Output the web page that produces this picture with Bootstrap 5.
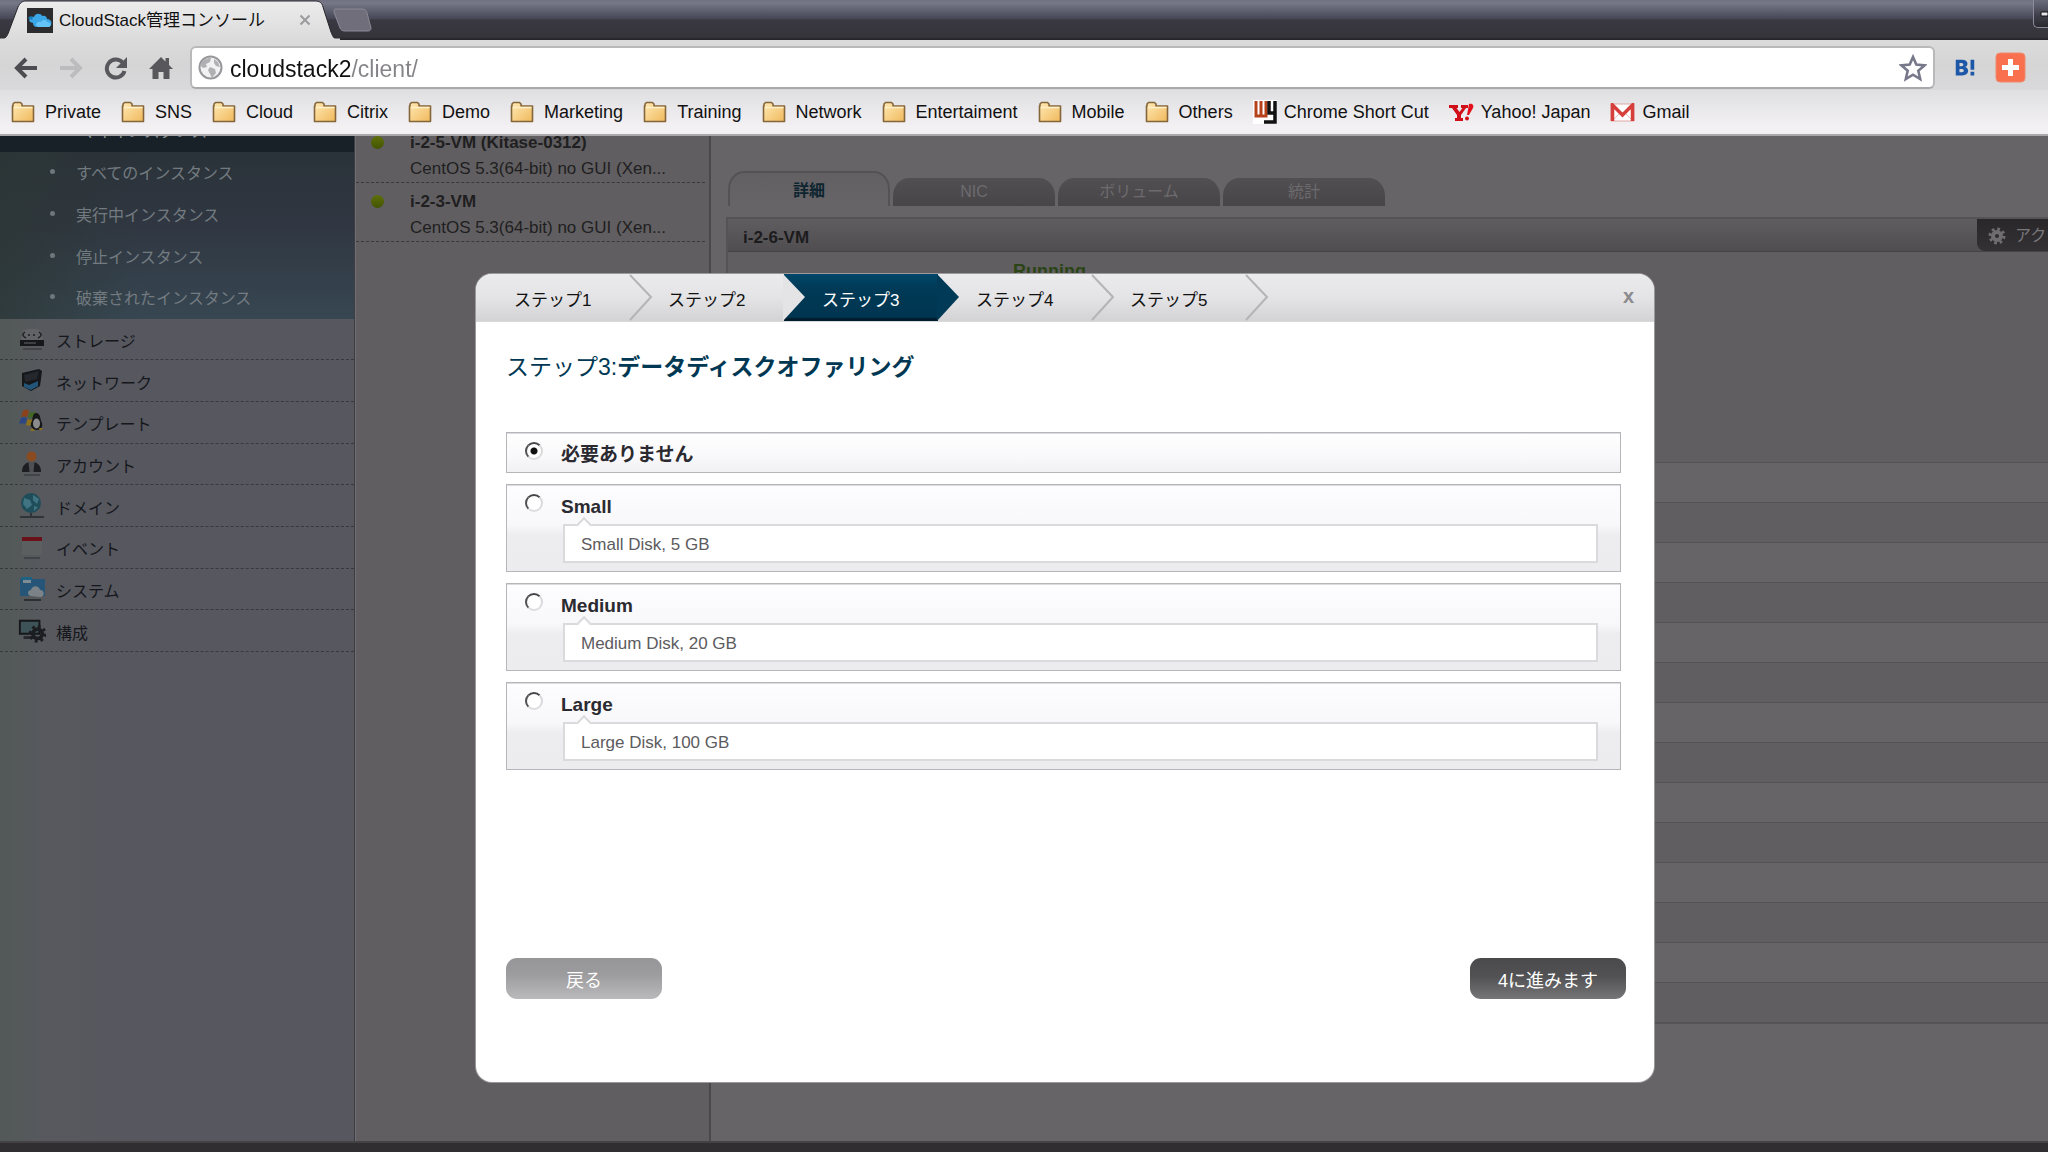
<!DOCTYPE html>
<html lang="ja">
<head>
<meta charset="utf-8">
<meta name="viewport" content="width=device-width, initial-scale=1">
<title>CloudStack管理コンソール</title>
<link href="https://cdn.jsdelivr.net/npm/bootstrap@5.3.0/dist/css/bootstrap.min.css" rel="stylesheet">
<style>
  body { font-family: "Liberation Sans", "Noto Sans CJK JP", sans-serif; font-size: 18px; line-height: 24px; color: #111; background: #676467; }
  a { color: inherit; text-decoration: none; }
  svg { display: block; flex: none; }

  /* browser frame */
  .titlebar { height: 40px; background: linear-gradient(#6f7080 0, #767787 3px, #4a4b5b 17px, #4a4b5b 18px, #3a3942 20px, #35343a 37px, #222126 40px); }
  .tab-shape { inset: 0 auto auto 0; }
  .tab-content-row { width: 330px; padding-left: 27px; font-size: 17px; }
  .tab-title { margin-left: 6px; padding-top: 2px; }
  .tab-close { border: 0; background: none; padding: 0; width: 14px; height: 14px; margin-right: 17px; }
  .newtab { border: 0; background: none; padding: 0; margin-left: 3px; height: 24px; }
  .winctl { width: 15px; height: 28px; border: solid #8b8c99; border-width: 0 0 1px 1px; border-radius: 0 0 0 5px; background: linear-gradient(#6b6c7b, #3d3d49 60%, #2b2a31); }
  .toolbar { height: 50px; background: linear-gradient(#dcdbdc, #d6d5d6 50%, #d9d8da); padding: 5px 22px 0 14px; }
  .tool-btn { border: 0; background: none; padding: 0; }
  .urlbox { height: 43px; background: #fff; border: 2px solid #b9b8bb; border-bottom-color: #a9a8ab; border-radius: 6px; padding: 0 6px 0 6px; margin-left: 17px; }
  .urlbox input { border: 0; outline: 0; min-width: 0; padding: 2px 0 0; margin-left: 7px; font-size: 23px; line-height: 30px; color: transparent; background: linear-gradient(90deg, #111 120px, #858387 120px); -webkit-background-clip: text; background-clip: text; }
  .bookmarks { height: 46px; gap: 20px; padding: 0 11px; background: linear-gradient(#dfdee0, #f3f1f3 85%); border-bottom: 2px solid #a9a8aa; }
  .bookmarks a { display: flex; align-items: center; gap: 10px; white-space: nowrap; }
  .bookmarks a.site { gap: 7px; }

  /* console */
  .side { width: 355px; background: linear-gradient(90deg, #525957, #57595e 12%, #57575f 45%, #57575f); border-right: 1px solid #3c3c41; font-size: 16px; }
  .side-current { height: 16px; background: #172127; color: #8b9193; padding: 0 0 10px 80px; }
  .side-current a { line-height: 20px; }
  .side-nav { display: grid; grid-auto-rows: 1fr; height: 500px; }
  .sub-group { grid-row: span 4; display: grid; grid-auto-rows: 1fr; background: linear-gradient(90deg, rgba(44,54,52,.7), rgba(44,54,52,0) 40%), linear-gradient(#2a3239, #303742 45%, #374752); color: #737b80; }
  .sub-group a { display: flex; align-items: center; gap: 21px; padding: 3px 0 0 50px; }
  .sub-group a::before { content: ""; width: 5px; height: 5px; border-radius: 50%; background: #6d777c; margin-bottom: 5px; }
  .main-item { display: flex; align-items: center; gap: 10px; padding-left: 18px; color: #15171c; border-bottom: 1px dashed #38393e; }
  .main-item span { padding-top: 6px; }
  .vm-list { width: 356px; background: #605e61; border-right: 2px solid #4a484b; border-left: 1px solid #706e72; font-size: 17px; color: #1f1e20; overflow: hidden; }
  .vm-item { height: 59px; margin-right: 4px; padding: 6px 0 0 15px; gap: 26px; border-bottom: 1px dashed #3a383b; }
  .vm-item.first-vm { margin-top: -12px; }
  .vm-item b, .vm-item small { display: block; line-height: 26px; font-size: 17px; white-space: nowrap; }
  .vm-dot { width: 13px; height: 13px; margin-top: 6px; border-radius: 50%; background: linear-gradient(#5d7009, #435400); flex: none; }
  .detail { background: #676467; min-width: 0; padding: 35px 0 0 15px; overflow: hidden; }
  .detail-tabs { gap: 3px; padding-left: 2px; height: 35px; font-size: 16px; }
  .detail-tabs button { border: 0; width: 162px; height: 28px; padding: 0; color: #6d6b6e; background: linear-gradient(#514f52, #474548); border-radius: 16px 16px 0 0 / 18px 18px 0 0; }
  .detail-tabs button.current { height: 35px; padding-top: 2px; color: #0e2530; background: linear-gradient(#626063, #676467); border: 2px solid #545255; border-bottom: 0; font-weight: bold; }
  .detail-box { margin-top: 11px; border: 2px solid #555356; border-right: 0; background: #605e61; }
  .detail-head { height: 33px; background: linear-gradient(#5f5d60, #4f4d50); border-bottom: 1px solid #454346; padding-left: 15px; font-size: 17px; color: #1c1b1d; }
  .detail-head b { padding-top: 5px; }
  .actions-btn { width: 71px; border: 0; padding: 2px 0 0 10px; background: linear-gradient(#29272a, #333134); color: #79777a; border-radius: 0 0 0 8px; overflow: hidden; white-space: nowrap; font-size: 16px; }
  .status-pane { height: 210px; padding: 7px 0 0 285px; font-size: 18px; color: #2b4415; }
  .data-line { height: 40px; border-top: 1px solid #545255; background: #605e61; }
  .data-line:nth-child(odd) { background: #676467; }
  .statusbar { height: 11px; background: #302e31; border-top: 2px solid #444245; }

  /* wizard */
  .wizard { left: 476px; top: 274px; width: 1178px; background: #fff; border-radius: 16px; box-shadow: 0 0 0 1px #9b999c; overflow: hidden; z-index: 5; }
  .wizard-head { height: 48px; background: linear-gradient(#ebeaec, #e4e3e5 50%, #d3d2d4); border-bottom: 1px solid #d9d8da; }
  .steps { list-style: none; margin: 0; padding: 0; }
  .steps li { width: 154px; padding: 6px 0 0 38px; font-size: 17px; position: relative; }
  .steps li svg { position: absolute; right: -23px; top: 0; z-index: 1; }
  .steps li.now { color: #fff; background: linear-gradient(#00476a 0, #003a56 30%, #003550 92%, #001d30 95%); }
  .wizard-close { border: 0; background: none; padding: 0 20px 4px; font-size: 20px; font-weight: bold; color: #8b8a8c; }
  .wizard-body { padding: 29px 28px 83px 30px; }
  .wizard h1 { font-size: 23px; line-height: 32px; color: #003853; margin: 0 0 49px; font-weight: 400; }
  .offers { gap: 11px; margin-right: 5px; }
  .offer { border: 1px solid #b7b5b9; box-shadow: inset 0 1px #dddbdf; background: linear-gradient(#fdfcfe 0, #f8f7f9 40px, #edecee 50px, #ecebed); padding: 9px 22px 8px 18px; }
  .offer.plain { background: linear-gradient(#fff, #f9f8fa 60%, #f1f0f2); padding-bottom: 4px; }
  .offer label { font-size: 19px; font-weight: bold; line-height: 26px; color: #2a2a30; padding-left: 18px; }
  .offer input { appearance: none; width: 18px; height: 18px; margin: 0; border: 2px solid; border-color: #46464a #d9d8da #dddcde #505055; border-radius: 50%; background: #fff; }
  .offer input:checked { background: radial-gradient(circle, #111 0 3px, #fff 4px); }
  .offer-desc { position: relative; margin: 4px 0 0 38px; height: 39px; padding: 3px 16px 0; border: 2px solid #dad9dc; background: #fff; font-size: 17px; color: #5c5b5e; }
  .offer-desc::before { content: ""; position: absolute; left: 14px; top: -7px; width: 10px; height: 10px; transform: rotate(45deg); background: #fff; border: solid #d9d8db; border-width: 2px 0 0 2px; }
  .wizard-foot { margin-top: 188px; }
  .wiz-btn { width: 156px; height: 41px; border: 0; border-radius: 11px; padding: 4px 0 0; color: #fff; font-size: 18px; }
  .wiz-back { background: linear-gradient(#969597, #9c9b9d 40%, #bab9bb); }
  .wiz-next { background: linear-gradient(#4a494b, #525153 45%, #757476); }
</style>
<script src="https://cdn.jsdelivr.net/npm/bootstrap@5.3.0/dist/js/bootstrap.bundle.min.js"></script>
</head>
<body class="d-flex flex-column vh-100 overflow-hidden position-relative">

<svg width="0" height="0" class="position-absolute" aria-hidden="true">
  <defs>
    <linearGradient id="gTab" x1="0" y1="0" x2="0" y2="1"><stop offset="0" stop-color="#ececec"/><stop offset="1" stop-color="#dcdbdc"/></linearGradient>
    <linearGradient id="gFold" x1="0" y1="0" x2="1" y2="1"><stop offset="0" stop-color="#ffe9b5"/><stop offset="1" stop-color="#f0b95c"/></linearGradient>
  </defs>
  <symbol id="folder" viewBox="0 0 24 22"><path d="M2 5V3l1.500-1.500h6L11 3v2h11.500v15.500h-21V5z" fill="url(#gFold)" stroke="#85653a" stroke-width="1.600" stroke-linejoin="round"/><path d="M3 6.500h18.500" stroke="#fff0c8" stroke-width="1.500"/></symbol>
</svg>

<header>
  <div class="titlebar d-flex position-relative">
    <svg class="tab-shape position-absolute" width="340" height="40" viewBox="0 0 340 40"><path d="M0 40c5-1 7-3 9-9l9-24c2-4 4-6 8-6h289c5 0 7 2 8 6l8 25c2 5 3 7 7 8z" fill="url(#gTab)" stroke="#26252b" stroke-width="1"/><path d="M0 39.500h340" stroke="#dcdbdc" stroke-width="2"/></svg>
    <div class="tab-content-row d-flex align-items-center position-relative">
      <svg width="26" height="25" viewBox="0 0 26 25"><path fill="#2c2c2f" d="M0 0h26v25H0z"/><path d="M3 14c-2-3 1-6 4-5 1-4 7-4 8-1 3-1 5 1 5 3 5 0 6 6 2 8H10c-3 0-4-2-4-4z" fill="#3ba7e6"/><path d="M9 17c0-3 3-4 5-3 2-3 6-2 6 0 4 0 5 5 1 5H11z" fill="#64c4f7"/><path d="M1 10c2-2 3-2 5-1l-1 3z" fill="#1c7fc0"/></svg>
      <span class="tab-title flex-fill">CloudStack管理コンソール</span>
      <button class="tab-close" aria-label="タブを閉じる"><svg width="12" height="12" viewBox="0 0 12 12"><path d="M1.500 1.500l9 9m0-9l-9 9" stroke="#9b9a9d" stroke-width="2"/></svg></button>
    </div>
    <button class="newtab align-self-center" aria-label="新しいタブ"><svg width="39" height="24" viewBox="0 0 39 24"><path d="M2 1h27c3 0 4 1 5 4l4 15c0 2-1 3-3 3H12c-3 0-4-1-5-3L1 4c0-2 0-3 1-3z" fill="#6f6e7a" stroke="#8b8a96"/></svg></button>
    <div class="winctl ms-auto d-flex align-items-center justify-content-end"><svg width="8" height="6"><path d="M1 1h7v4H1z" fill="#e5e5ea" stroke="#111"/></svg></div>
  </div>

  <div class="toolbar d-flex align-items-center">
    <div class="d-flex align-items-center" style="gap:21px">
      <button class="tool-btn" aria-label="戻る"><svg width="24" height="24" viewBox="0 0 24 24"><path d="M12 3l-9 9 9 9M3 12h20" fill="none" stroke="#4d4c50" stroke-width="4"/></svg></button>
      <button class="tool-btn" aria-label="進む"><svg width="24" height="24" viewBox="0 0 24 24"><path d="M12 3l9 9-9 9M21 12H1" fill="none" stroke="#bcbbbe" stroke-width="4"/></svg></button>
      <button class="tool-btn" aria-label="再読み込み"><svg width="24" height="24" viewBox="0 0 24 24"><path d="M18.500 6.500A9 9 0 1 0 20.500 15" fill="none" stroke="#58575b" stroke-width="4"/><path d="M23 1v11H12z" fill="#58575b"/></svg></button>
      <button class="tool-btn" aria-label="ホーム"><svg width="24" height="24" viewBox="0 0 24 24"><path d="M12 1L0 13h3.500v10h6v-7h5v7h6V13H24l-4-4V2h-3.500v3.500z" fill="#58575b"/></svg></button>
    </div>
    <div class="urlbox d-flex align-items-center flex-fill">
      <svg width="25" height="25" viewBox="0 0 25 25"><circle cx="12.500" cy="12.500" r="11" fill="#f1f1f3" stroke="#97969a" stroke-width="2"/><path d="M5 6c3-3 6-3 8-3l-1 4-4 2 1 3-4 1-3-3zM12 12l5 2 1 4-4 5-2-4-2-4zM16 4l4 3 2 5-4-1-2-3z" fill="#b1b0b4"/></svg>
      <input class="flex-fill" type="text" aria-label="アドレス" value="cloudstack2/client/">
      <button class="tool-btn" aria-label="ブックマークに追加"><svg width="28" height="28" viewBox="0 0 28 28"><path d="M14 3l3.300 7.600 8.200.8-6.200 5.400 1.900 8.200-7.200-4.300L6.800 25l1.900-8.200-6.200-5.400 8.200-.8z" fill="#fff" stroke="#77798a" stroke-width="2.600"/></svg></button>
    </div>
    <svg class="ms-3" width="28" height="24" viewBox="0 0 28 26" role="img" aria-label="B!"><path d="M4 4h7c7 0 7 7 3 8 5 1 5 9-3 9H4zm4 3.500v3.500h2c3 0 3-3.500 0-3.500zm0 6.500v3.500h2.500c3 0 3-3.500 0-3.500zM20 4h4v11h-4zM20 17h4v4h-4z" fill="#1c57a8" fill-rule="evenodd"/></svg>
    <svg class="ms-3" width="31" height="31" viewBox="0 0 31 31"><rect x="1" y="1" width="29" height="29" rx="4" fill="#f9704f" stroke="#ee8a70"/><path d="M15.500 7v17M7 15.500h17" stroke="#fff" stroke-width="5"/></svg>
  </div>

  <nav class="bookmarks d-flex align-items-center" aria-label="ブックマーク">
    <a href="#"><svg width="24" height="22"><use href="#folder"/></svg>Private</a>
    <a href="#"><svg width="24" height="22"><use href="#folder"/></svg>SNS</a>
    <a href="#"><svg width="24" height="22"><use href="#folder"/></svg>Cloud</a>
    <a href="#"><svg width="24" height="22"><use href="#folder"/></svg>Citrix</a>
    <a href="#"><svg width="24" height="22"><use href="#folder"/></svg>Demo</a>
    <a href="#"><svg width="24" height="22"><use href="#folder"/></svg>Marketing</a>
    <a href="#"><svg width="24" height="22"><use href="#folder"/></svg>Training</a>
    <a href="#"><svg width="24" height="22"><use href="#folder"/></svg>Network</a>
    <a href="#"><svg width="24" height="22"><use href="#folder"/></svg>Entertaiment</a>
    <a href="#"><svg width="24" height="22"><use href="#folder"/></svg>Mobile</a>
    <a href="#"><svg width="24" height="22"><use href="#folder"/></svg>Others</a>
    <a class="site" href="#"><svg width="24" height="24" viewBox="0 0 24 24"><path fill="#fff" d="M0 0h24v24H0z"/><path d="M3 1v15h10V1M8 1v15" fill="none" stroke="#b5421a" stroke-width="3"/><path d="M16 1v12h6M22 1v21H11" fill="none" stroke="#111" stroke-width="3.500"/></svg>Chrome Short Cut</a>
    <a class="site" href="#"><svg width="25" height="20" viewBox="0 0 25 20"><path d="M0 3h9v3H7.500l3 4 3-4H12V3h7v3h-2l-5 7v3h2v3H6v-3h2v-3L3 6H0z" fill="#d00f18"/><path d="M20 2c4-1 5 2 4 4l-4 7h-2z" fill="#e3101b"/><circle cx="18" cy="16.500" r="2" fill="#d00f18"/></svg>Yahoo! Japan</a>
    <a class="site" href="#"><svg width="25" height="19" viewBox="0 0 25 19"><path d="M1 1h23v17H1z" fill="#fff" stroke="#dfa5a5"/><path d="M3 17l7-7m12 7l-7-7" stroke="#e3b9b9"/><path d="M2.500 18V2l10 10 10-10v16" fill="none" stroke="#d6403c" stroke-width="3.500"/></svg>Gmail</a>
  </nav>
</header>

<main class="d-flex flex-fill overflow-hidden">
  <nav class="side flex-shrink-0" aria-label="ナビゲーション">
    <div class="side-current overflow-hidden d-flex align-items-end"><a href="#">マイインスタンス</a></div>
    <div class="side-nav">
      <div class="sub-group">
        <a href="#">すべてのインスタンス</a>
        <a href="#">実行中インスタンス</a>
        <a href="#">停止インスタンス</a>
        <a href="#">破棄されたインスタンス</a>
      </div>
      <a class="main-item" href="#"><svg width="28" height="28" viewBox="0 0 28 28"><path d="M5 6c4-3 14-3 18 0l2 9H3z" fill="#626366"/><path d="M7 7c-3 2-3 4 1 6M21 7c3 2 3 4-1 6M10 10h2m3 0h2" fill="none" stroke="#1d1e21" stroke-width="1.500"/><path d="M2 15h24v6H2z" fill="#16171a"/><path d="M6 18h12" stroke="#65666a"/><path d="M5 24h19" stroke="#414346" stroke-width="2"/></svg><span>ストレージ</span></a>
      <a class="main-item" href="#"><svg width="28" height="28" viewBox="0 0 28 28"><path d="M4 6l17-4 3 2-2 15-9 5-9-5z" fill="#15171a"/><path d="M6 16l5 2 9-4v5l-7 4-7-3z" fill="#235579"/><path d="M6 8l15-4-2 8-12 3z" fill="#24272b"/></svg><span>ネットワーク</span></a>
      <a class="main-item" href="#"><svg width="28" height="28" viewBox="0 0 28 28"><path d="M5 3c3-2 5-1 6 0L9 9c-2-1-4-1-6 0z" fill="#8b4218"/><path d="M12 4c2 1 4 1 6-1l-2 6c-2 1-4 1-6 0z" fill="#416a20"/><path d="M3 10c2-1 4-1 6 0l-2 6c-2-1-4-1-6 0z" fill="#2a4685"/><path d="M10 11c2 1 3 1 5 0l-2 6c-2 1-3 1-5 0z" fill="#8c721c"/><path d="M18 5c5 0 4 7 6 10 1 4-1 7-5 7s-7-3-6-7c2-3 1-10 5-10z" fill="#17181a"/><ellipse cx="18.500" cy="15.500" rx="3.500" ry="5" fill="#8b8b8b"/><path d="M14 20l3 3-5 0zM21 20l4 0-3 3z" fill="#8c721c"/></svg><span>テンプレート</span></a>
      <a class="main-item" href="#"><svg width="28" height="28" viewBox="0 0 28 28"><circle cx="13.500" cy="6.500" r="5" fill="#8a4b20"/><path d="M4 22c0-7 4-10 9.500-10S23 15 23 22z" fill="#1d1e21"/><path d="M13.500 12l-3 0 1 10h4l1-10z" fill="#4e5054"/><path d="M6 25h16" stroke="#414346" stroke-width="2"/></svg><span>アカウント</span></a>
      <a class="main-item" href="#"><svg width="28" height="28" viewBox="0 0 28 28"><circle cx="13" cy="11" r="10" fill="#1f4d59"/><path d="M6 6l6 2 2 5-5 4-4-5zM15 3l6 4-2 5-4-4zM16 14l4 1-4 4z" fill="#417482"/><path d="M13 21v4M2 25h24" stroke="#303438" stroke-width="2"/></svg><span>ドメイン</span></a>
      <a class="main-item" href="#"><svg width="28" height="28" viewBox="0 0 28 28"><path d="M4 4h20v18H4z" fill="#5b5f5f"/><path d="M4 4h20v4H4z" fill="#691219"/><path d="M6 25h16" stroke="#414346" stroke-width="2"/></svg><span>イベント</span></a>
      <a class="main-item" href="#"><svg width="28" height="28" viewBox="0 0 28 28"><path d="M2 4h25v17H2z" fill="#275577"/><path d="M3 2h11v3H3z" fill="#1e6283"/><path d="M5 5h8v3H5z" fill="#7f8c94"/><path d="M13 21c-4 0-4-6 0-6 1-5 8-5 9 0 5 0 5 7 0 7z" fill="#7b8388"/><path d="M6 25h17" stroke="#2d2f33" stroke-width="2"/></svg><span>システム</span></a>
      <a class="main-item" href="#"><svg width="28" height="28" viewBox="0 0 30 28"><path d="M2 3h21v14H2z" fill="#3d5358" stroke="#15171a" stroke-width="2"/><path d="M6 21h12" stroke="#26282b" stroke-width="3"/><circle cx="21" cy="17" r="5" fill="none" stroke="#1b1d20" stroke-width="4"/><circle cx="21" cy="17" r="8" fill="none" stroke="#1b1d20" stroke-width="3" stroke-dasharray="3 3.280"/></svg><span>構成</span></a>
    </div>
  </nav>

  <section class="vm-list flex-shrink-0" aria-label="インスタンス一覧">
    <div class="vm-item first-vm d-flex"><span class="vm-dot"></span><div><b>i-2-5-VM (Kitase-0312)</b><small>CentOS 5.3(64-bit) no GUI (Xen...</small></div></div>
    <div class="vm-item d-flex"><span class="vm-dot"></span><div><b>i-2-3-VM</b><small>CentOS 5.3(64-bit) no GUI (Xen...</small></div></div>
  </section>

  <section class="detail flex-fill">
    <div class="detail-tabs d-flex align-items-end">
      <button class="current">詳細</button><button>NIC</button><button>ボリューム</button><button>統計</button>
    </div>
    <div class="detail-box">
      <div class="detail-head d-flex justify-content-between">
        <b class="align-self-center">i-2-6-VM</b>
        <button class="actions-btn d-flex align-items-center"><svg class="me-2" width="20" height="20" viewBox="0 0 20 20"><circle cx="10" cy="10" r="4" fill="none" stroke="#6f6d70" stroke-width="4"/><circle cx="10" cy="10" r="7" fill="none" stroke="#6f6d70" stroke-width="3" stroke-dasharray="2.750 2.750"/></svg>アクション</button>
      </div>
      <div class="status-pane"><b>Running</b></div>
      <div class="data-lines">
        <div class="data-line"></div><div class="data-line"></div><div class="data-line"></div><div class="data-line"></div><div class="data-line"></div><div class="data-line"></div><div class="data-line"></div>
        <div class="data-line"></div><div class="data-line"></div><div class="data-line"></div><div class="data-line"></div><div class="data-line"></div><div class="data-line"></div><div class="data-line"></div>
      </div>
    </div>
  </section>
</main>
<footer class="statusbar flex-shrink-0"></footer>

<div class="wizard position-absolute" role="dialog" aria-labelledby="wizardTitle">
  <div class="wizard-head d-flex justify-content-between">
    <ol class="steps d-flex">
      <li class="d-flex align-items-center">ステップ1<svg width="24" height="47" viewBox="0 0 24 47"><path d="M1 1l21 22L1 46" fill="none" stroke="#b4b3b6" stroke-width="2"/></svg></li>
      <li class="d-flex align-items-center">ステップ2<svg width="24" height="47" viewBox="0 0 24 47"><path d="M0 0l22 23L0 47z" fill="#e4e3e5"/></svg></li>
      <li class="now d-flex align-items-center">ステップ3<svg width="24" height="47" viewBox="0 0 24 47"><path d="M0 0l22 23L0 47z" fill="#003a56"/></svg></li>
      <li class="d-flex align-items-center">ステップ4<svg width="24" height="47" viewBox="0 0 24 47"><path d="M1 1l21 22L1 46" fill="none" stroke="#b4b3b6" stroke-width="2"/></svg></li>
      <li class="d-flex align-items-center">ステップ5<svg width="24" height="47" viewBox="0 0 24 47"><path d="M1 1l21 22L1 46" fill="none" stroke="#b4b3b6" stroke-width="2"/></svg></li>
    </ol>
    <button class="wizard-close" aria-label="閉じる">x</button>
  </div>
  <form class="wizard-body">
    <h1 id="wizardTitle">ステップ3:<b>データディスクオファリング</b></h1>
    <div class="offers d-flex flex-column">
      <div class="offer plain"><div class="d-flex"><input type="radio" name="disk" id="d0" checked><label for="d0">必要ありません</label></div></div>
      <div class="offer"><div class="d-flex"><input type="radio" name="disk" id="d1"><label for="d1">Small</label></div><div class="offer-desc d-flex align-items-center">Small Disk, 5 GB</div></div>
      <div class="offer"><div class="d-flex"><input type="radio" name="disk" id="d2"><label for="d2">Medium</label></div><div class="offer-desc d-flex align-items-center">Medium Disk, 20 GB</div></div>
      <div class="offer"><div class="d-flex"><input type="radio" name="disk" id="d3"><label for="d3">Large</label></div><div class="offer-desc d-flex align-items-center">Large Disk, 100 GB</div></div>
    </div>
    <div class="wizard-foot d-flex justify-content-between">
      <button type="button" class="wiz-btn wiz-back">戻る</button>
      <button type="button" class="wiz-btn wiz-next">4に進みます</button>
    </div>
  </form>
</div>
</body>
</html>
